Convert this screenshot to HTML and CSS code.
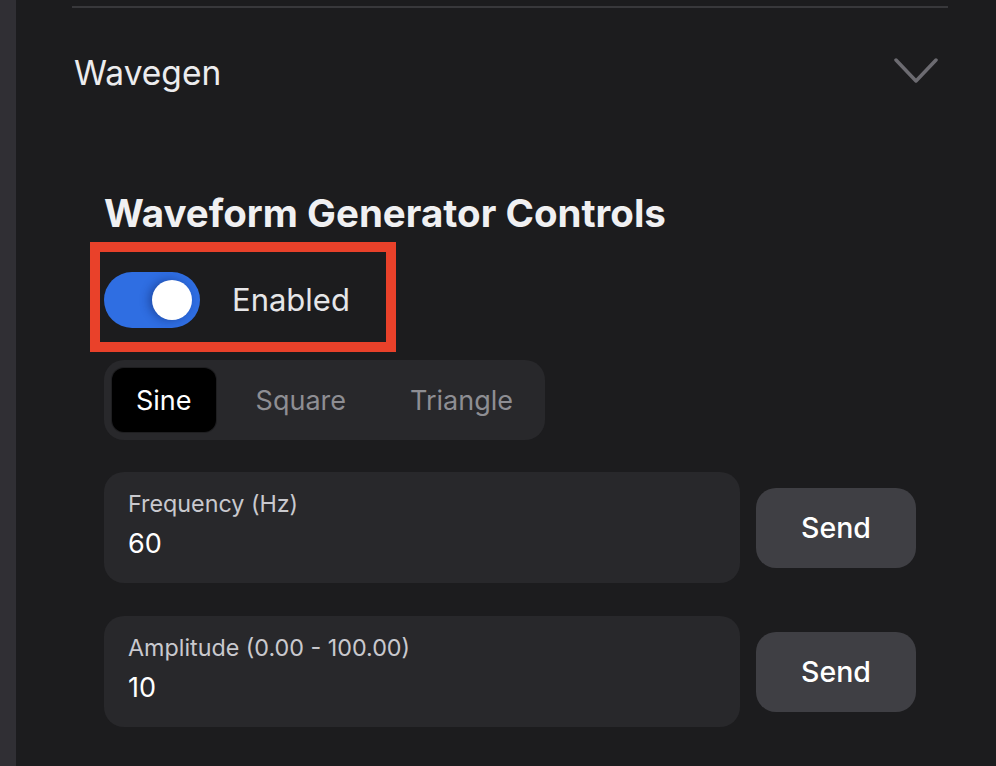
FILE: index.html
```html
<!DOCTYPE html>
<html lang="en">
<head>
<meta charset="utf-8">
<title>Wavegen</title>
<link rel="stylesheet" href="styles.css">
</head>
<body>
<div class="rail"></div>
<main class="main">
  <div class="divider"></div>
  <section class="section">
    <div class="section-header">
      <span class="section-title">Wavegen</span>
      <svg class="chevron" width="44" height="26" viewBox="0 0 44 26" aria-hidden="true">
        <polyline points="2,2 22,23 42,2" fill="none" stroke="#6c6b71" stroke-width="3.5" stroke-linecap="round" stroke-linejoin="round"/>
      </svg>
    </div>
    <div class="section-body">
      <h2 class="heading">Waveform Generator Controls</h2>
      <div class="toggle-row">
        <div class="toggle"><span class="knob"></span></div>
        <span class="toggle-label">Enabled</span>
      </div>
      <div class="segmented">
        <span class="seg seg-active">Sine</span>
        <span class="seg">Square</span>
        <span class="seg">Triangle</span>
      </div>
      <div class="field-row field-row-first">
        <div class="field">
          <div class="field-label">Frequency (Hz)</div>
          <div class="field-value">60</div>
        </div>
        <button class="send">Send</button>
      </div>
      <div class="field-row">
        <div class="field">
          <div class="field-label">Amplitude (0.00 - 100.00)</div>
          <div class="field-value">10</div>
        </div>
        <button class="send">Send</button>
      </div>
    </div>
  </section>
</main>
</body>
</html>
```
FILE: styles.css
```css
* { box-sizing: border-box; }
html, body { height: 100%; }
body {
  margin: 0;
  display: flex;
  background: #1c1c1e;
  font-family: Inter, "Noto Sans", "Liberation Sans", sans-serif;
  color: #ececee;
  overflow: hidden;
}
.rail {
  width: 16px;
  flex: 0 0 16px;
  background: #302f34;
}
.main {
  flex: 1;
  padding: 6px 48px 0 56px;
}
.divider {
  border-top: 2px solid #38383b;
}
.section-header {
  height: 130px;
  display: flex;
  align-items: center;
  justify-content: space-between;
  padding: 0 10px 0 2px;
}
.section-title {
  font-size: 33.5px;
  line-height: 44px;
  color: #ececee;
}
.chevron { display: block; margin-top: -4px; }
.section-body {
  padding: 51px 32px 0 32px;
}
.heading {
  margin: 0;
  font-size: 38.5px;
  line-height: 48px;
  font-weight: 700;
  color: #f0f0f2;
}
.toggle-row {
  margin-top: 19px;
  display: inline-flex;
  align-items: center;
  gap: 32px;
  padding: 16px 32px 10px 0;
  outline: 10px solid #e9412a;
  outline-offset: 4px;
}
.toggle {
  width: 96px;
  height: 56px;
  border-radius: 28px;
  background: #2f6ee2;
  display: flex;
  align-items: center;
  justify-content: flex-end;
  padding: 0 8px;
}
.knob {
  width: 40px;
  height: 40px;
  border-radius: 50%;
  background: #ffffff;
  box-shadow: -3px 0 10px rgba(10, 30, 90, 0.45);
}
.toggle-label {
  font-size: 31px;
  line-height: 40px;
  color: #e6e6e8;
}
.segmented {
  margin-top: 22px;
  display: flex;
  width: fit-content;
  gap: 16px;
  padding: 8px;
  border-radius: 20px;
  background: #28282b;
}
.seg {
  height: 64px;
  padding: 0 24px;
  display: flex;
  align-items: center;
  border-radius: 12px;
  font-size: 27px;
  color: #8e8e93;
}
.seg-active {
  background: #000000;
  color: #ffffff;
  box-shadow: 0 0 0 1px #1e1e20;
}
.field-row {
  margin-top: 33px;
  display: flex;
  align-items: center;
  gap: 16px;
}
.field-row-first {
  margin-top: 32px;
}
.field {
  flex: 1;
  padding: 16px 24px 19px;
  border-radius: 20px;
  background: #28282b;
}
.field-label {
  font-size: 23.3px;
  line-height: 32px;
  color: #c9c9ce;
}
.field-value {
  margin-top: 4px;
  font-size: 27px;
  line-height: 40px;
  color: #ffffff;
}
.send {
  flex: 0 0 160px;
  height: 80px;
  border: none;
  border-radius: 20px;
  background: #3f3f44;
  color: #ffffff;
  font-family: inherit;
  font-size: 28.5px;
  font-weight: 500;
  padding: 0;
}
```
